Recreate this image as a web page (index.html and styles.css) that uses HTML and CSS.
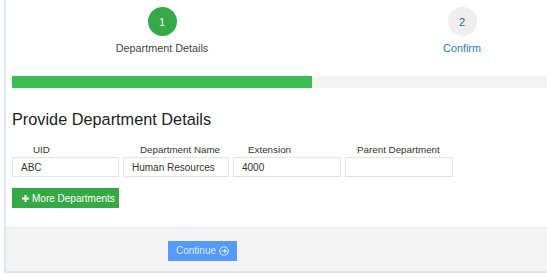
FILE: index.html
```html
<!DOCTYPE html>
<html lang="en">
<head>
  <meta charset="UTF-8">
  <title>Departments</title>
  <link rel="stylesheet" href="styles.css">
</head>
<body>
  <!-- Wizard panel -->
  <div class="panel">
    <div class="panel-body">
      <div class="steps">
        <div class="step active">
          <div class="step-circle">1</div>
          <div class="step-label">Department Details</div>
        </div>
        <div class="step">
          <div class="step-circle">2</div>
          <div class="step-label">Confirm</div>
        </div>
      </div>

      <div class="progress">
        <div class="progress-bar" style="width: 50%"></div>
      </div>

      <h3 class="title">Provide Department Details</h3>

      <div class="dept-grid">
        <div class="col-label uid">UID</div>
        <div class="col-label name">Department Name</div>
        <div class="col-label ext">Extension</div>
        <div class="col-label parent">Parent Department</div>
        <input class="field" type="text" value="ABC">
        <input class="field" type="text" value="Human Resources">
        <input class="field" type="text" value="4000">
        <input class="field" type="text" value="">
      </div>

      <button class="btn btn-green" type="button">
        <svg class="plus" width="7" height="7" viewBox="0 0 7 7"><path d="M2.5 0h2v2.5H7v2H4.5V7h-2V4.5H0v-2h2.5z" fill="#fff"/></svg>
        More Departments
      </button>
    </div>

    <div class="panel-footer">
      <button class="btn btn-blue" type="button">
        Continue
        <svg class="arrow" width="10" height="10" viewBox="0 0 10 10"><circle cx="5" cy="5" r="4.2" fill="none" stroke="currentColor" stroke-width="1.1"/><path d="M2.7 5h4.4M5.2 3.1L7.1 5 5.2 6.9" fill="none" stroke="currentColor" stroke-width="1.1"/></svg>
      </button>
    </div>
  </div>
</body>
</html>
```

FILE: styles.css
```css
* {
  margin: 0;
  padding: 0;
  box-sizing: border-box;
}

html, body {
  height: 100%;
  overflow: hidden;
  background: #fff;
  font-family: 'Liberation Sans', Arial, sans-serif;
  color: #333;
}

.panel {
  margin-left: 4px;
  overflow: hidden;
  border-left: 2px solid #dde8f6;
  border-bottom: 2px solid #dde8f6;
}

.panel-body {
  padding: 7px 0 19px 6px;
}

/* Steps */
.steps {
  display: grid;
  grid-template-columns: 300px 300px;
}

.step {
  display: flex;
  flex-direction: column;
  align-items: center;
}

.step-circle {
  width: 29px;
  height: 29px;
  border-radius: 50%;
  background: #eee;
  color: #2a6aa0;
  font-size: 11px;
  display: flex;
  align-items: center;
  justify-content: center;
}

.step.active .step-circle {
  background: #35a947;
  color: #fff;
}

.step-label {
  margin-top: 6px;
  font-size: 10.8px;
  line-height: 13px;
  color: #2f7ab5;
}

.step.active .step-label {
  color: #444;
}

.progress {
  width: 600px;
  height: 12px;
  margin-top: 21px;
  background: #f3f3f3;
}

.progress-bar {
  height: 100%;
  background: #3cbe51;
}

.title {
  margin-top: 21px;
  font-size: 16.3px;
  line-height: 20px;
  font-weight: normal;
  color: #222;
}

/* Department row */
.dept-grid {
  display: grid;
  grid-template-columns: 107px 106px 108px 108px;
  column-gap: 4px;
  row-gap: 1px;
  margin-top: 14px;
}

.col-label {
  font-size: 9.8px;
  line-height: 13px;
  color: #333;
}

.col-label.uid { padding-left: 21px; }
.col-label.name { padding-left: 17px; }
.col-label.ext { padding-left: 15px; }
.col-label.parent { padding-left: 12px; }

.field {
  height: 20px;
  border: 1px solid #e3e3e3;
  padding: 0 8px;
  font-family: inherit;
  font-size: 10px;
  color: #333;
  outline: none;
}

.btn {
  border: none;
  font-family: inherit;
  font-size: 10px;
  height: 20px;
  display: inline-flex;
  align-items: center;
  white-space: nowrap;
  cursor: pointer;
}

.btn-green {
  margin-top: 11px;
  width: 107px;
  padding-left: 10px;
  background: #37a846;
  color: #fff;
  gap: 3px;
}

.panel-footer {
  border-top: 1px solid #e6e6e6;
  background: #f4f4f4;
  height: 44px;
  padding: 12px 0 0 162px;
}

.btn-blue {
  width: 69px;
  justify-content: center;
  gap: 3px;
  background: #5599fd;
  color: rgba(255, 255, 255, 0.82);
}
```
